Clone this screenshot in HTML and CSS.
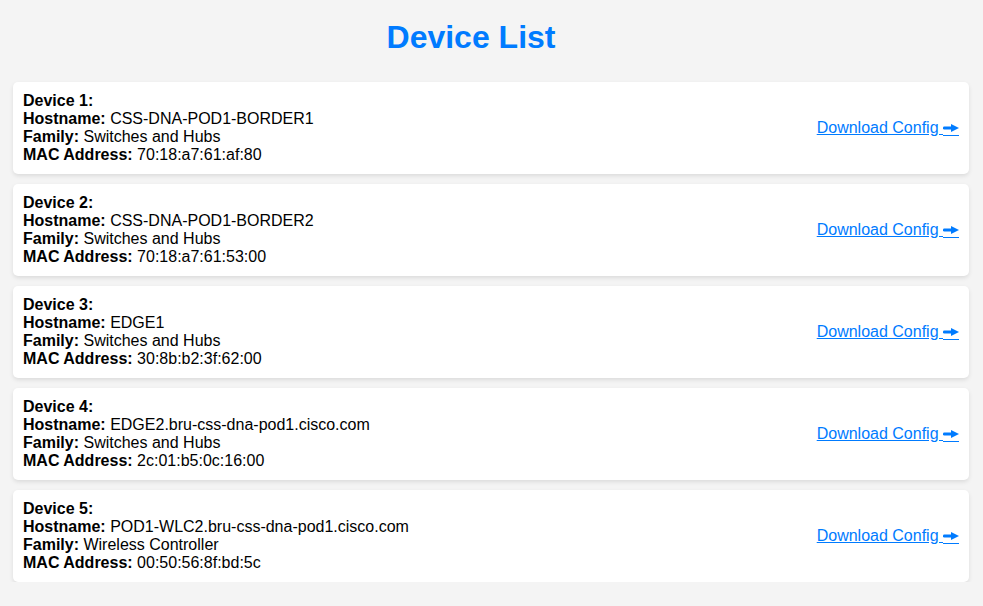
FILE: index.html
```html
<!DOCTYPE html>
<html>
<head>
<meta charset="utf-8">
<title>Device List</title>
<link rel="stylesheet" href="styles.css">
</head>
<body>
<h1 class="title">Device List</h1>
<div class="list">
  <div class="card">
    <div class="info">
      <div><b>Device 1:</b></div>
      <div><b>Hostname:</b> CSS-DNA-POD1-BORDER1</div>
      <div><b>Family:</b> Switches and Hubs</div>
      <div><b>MAC Address:</b> 70:18:a7:61:af:80</div>
    </div>
    <a class="dl" href="#">Download Config <svg class="arrow" viewBox="0 0 16 12" width="16" height="12"><rect x="0" y="2.5" width="9" height="3" rx="1.2"/><polygon points="8,0 16,4 8,8"/><rect x="0" y="11" width="16" height="1"/></svg></a>
  </div>
  <div class="card">
    <div class="info">
      <div><b>Device 2:</b></div>
      <div><b>Hostname:</b> CSS-DNA-POD1-BORDER2</div>
      <div><b>Family:</b> Switches and Hubs</div>
      <div><b>MAC Address:</b> 70:18:a7:61:53:00</div>
    </div>
    <a class="dl" href="#">Download Config <svg class="arrow" viewBox="0 0 16 12" width="16" height="12"><rect x="0" y="2.5" width="9" height="3" rx="1.2"/><polygon points="8,0 16,4 8,8"/><rect x="0" y="11" width="16" height="1"/></svg></a>
  </div>
  <div class="card">
    <div class="info">
      <div><b>Device 3:</b></div>
      <div><b>Hostname:</b> EDGE1</div>
      <div><b>Family:</b> Switches and Hubs</div>
      <div><b>MAC Address:</b> 30:8b:b2:3f:62:00</div>
    </div>
    <a class="dl" href="#">Download Config <svg class="arrow" viewBox="0 0 16 12" width="16" height="12"><rect x="0" y="2.5" width="9" height="3" rx="1.2"/><polygon points="8,0 16,4 8,8"/><rect x="0" y="11" width="16" height="1"/></svg></a>
  </div>
  <div class="card">
    <div class="info">
      <div><b>Device 4:</b></div>
      <div><b>Hostname:</b> EDGE2.bru-css-dna-pod1.cisco.com</div>
      <div><b>Family:</b> Switches and Hubs</div>
      <div><b>MAC Address:</b> 2c:01:b5:0c:16:00</div>
    </div>
    <a class="dl" href="#">Download Config <svg class="arrow" viewBox="0 0 16 12" width="16" height="12"><rect x="0" y="2.5" width="9" height="3" rx="1.2"/><polygon points="8,0 16,4 8,8"/><rect x="0" y="11" width="16" height="1"/></svg></a>
  </div>
  <div class="card">
    <div class="info">
      <div><b>Device 5:</b></div>
      <div><b>Hostname:</b> POD1-WLC2.bru-css-dna-pod1.cisco.com</div>
      <div><b>Family:</b> Wireless Controller</div>
      <div><b>MAC Address:</b> 00:50:56:8f:bd:5c</div>
    </div>
    <a class="dl" href="#">Download Config <svg class="arrow" viewBox="0 0 16 12" width="16" height="12"><rect x="0" y="2.5" width="9" height="3" rx="1.2"/><polygon points="8,0 16,4 8,8"/><rect x="0" y="11" width="16" height="1"/></svg></a>
  </div>
</div>
</body>
</html>
```
FILE: styles.css
```css
html, body {
  margin: 0;
  padding: 0;
  background: #f4f4f4;
}
body {
  font-family: "Liberation Sans", Arial, sans-serif;
  color: #000;
  padding: 0 14px 0 13px;
}
.title {
  font-size: 32px;
  font-weight: bold;
  color: #007bff;
  text-align: center;
  margin: 19px 0 26px;
  padding-right: 40px;
  line-height: 37px;
}
.list {
  display: flex;
  flex-direction: column;
  gap: 10px;
}
.card {
  background: #fff;
  border-radius: 5px;
  box-shadow: 0 2px 4px rgba(0,0,0,0.1);
  padding: 10px;
  display: flex;
  align-items: center;
  justify-content: space-between;
}
.info {
  font-size: 16px;
  line-height: 18px;
}
.dl {
  color: #007bff;
  text-decoration: underline;
  font-size: 16px;
  white-space: nowrap;
}
.arrow {
  fill: #007bff;
  vertical-align: -3px;
}
```
